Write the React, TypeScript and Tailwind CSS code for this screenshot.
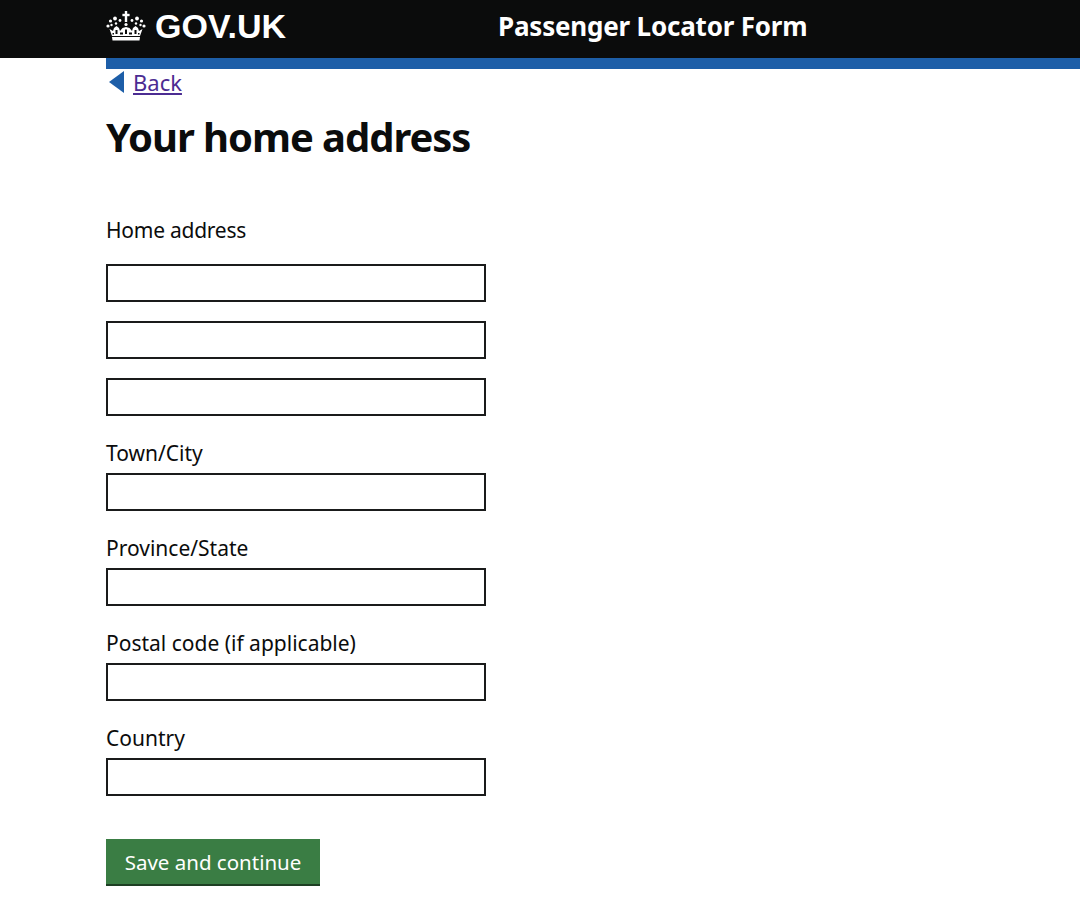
const fields = [
  { label: 'Town/City' },
  { label: 'Province/State' },
  { label: 'Postal code (if applicable)' },
  { label: 'Country' },
];

function Crown() {
  return (
    <svg width="40" height="30" viewBox="0 0 40 30" fill="#fff" className="shrink-0">
      {/* cross */}
      <rect x="18.8" y="0" width="2.4" height="11" />
      <rect x="16.4" y="2.8" width="7.2" height="2.4" />
      {/* pearls on the arches */}
      <circle cx="14" cy="9.5" r="1.4" />
      <circle cx="26" cy="9.5" r="1.4" />
      <circle cx="9" cy="7.5" r="1.9" />
      <circle cx="31" cy="7.5" r="1.9" />
      <circle cx="4.5" cy="10" r="1.6" />
      <circle cx="35.5" cy="10" r="1.6" />
      <circle cx="2" cy="15" r="1.6" />
      <circle cx="38" cy="15" r="1.6" />
      <circle cx="5.5" cy="14" r="1.2" />
      <circle cx="34.5" cy="14" r="1.2" />
      <circle cx="10" cy="12.5" r="1.2" />
      <circle cx="30" cy="12.5" r="1.2" />
      <circle cx="20" cy="13.5" r="1.6" />
      {/* fleurs and band */}
      <path d="M3.5 18 L7 20 L8 17 L10.5 15 L13 17 L14 20 L16.5 17 L20 16 L23.5 17 L26 20 L27 17 L29.5 15 L32 17 L33 20 L36.5 18 L34 25 L6 25 Z" />
      <path d="M9.5 19 h2 v4 h-2 z M19 18.5 h2 v4.5 h-2 z M28.5 19 h2 v4 h-2 z M14 21.5 h3 v2 h-3 z M23 21.5 h3 v2 h-3 z M6.5 22 h1.5 v1.5 h-1.5 z M32 22 h1.5 v1.5 h-1.5 z" fill="#0b0c0c" />
      <path d="M6 26 H34 L33.5 29.5 H6.5 Z" />
    </svg>
  );
}

function TextInput() {
  return <input type="text" className="block w-[380px] h-[38px] border-2 border-[#1a1b1b] bg-white" />;
}

export default function App() {
  return (
    <div className="min-h-[923px] bg-white text-[#0b0c0c] font-['Noto_Sans',sans-serif]">
      <header className="h-[58px] bg-[#0b0c0c] pl-[106px] pb-[6px] flex items-center text-white">
        <div className="w-[392px] flex items-center gap-[9px]">
          <Crown />
          <span className="text-[34px] leading-none font-bold font-['Liberation_Sans',sans-serif]">GOV.UK</span>
        </div>
        <span className="text-[26px] leading-none font-bold tracking-[-0.2px]">Passenger Locator Form</span>
      </header>
      <div className="ml-[106px] h-[11px] bg-[#1d5ea8]" />
      <main className="pl-[106px]">
        <a href="#" className="flex items-center h-[26px] gap-[9px] text-[22px] text-[#4c2c92] underline">
          <span className="ml-[3px] w-0 h-0 border-y-[11px] border-y-transparent border-r-[15px] border-r-[#1d5ea8]" />
          Back
        </a>
        <h1 className="mt-[12px] text-[40px] leading-[60px] font-bold tracking-[-1.05px]">Your home address</h1>
        <div className="mt-[48px] text-[21px] leading-[30px] tracking-[-0.25px]">Home address</div>
        <div className="mt-[19px] flex flex-col gap-[19px]">
          <TextInput />
          <TextInput />
          <TextInput />
        </div>
        {fields.map(f => (
          <div key={f.label} className="mt-[22px]">
            <label className="block text-[21px] leading-[30px] mb-[5px]">{f.label}</label>
            <TextInput />
          </div>
        ))}
        <button className="mt-[43px] block w-[214px] h-[47px] pt-[2px] bg-[#3a7d44] border-b-[2px] border-b-[#1d3f23] text-white text-[20.5px]">
          Save and continue
        </button>
      </main>
    </div>
  );
}
